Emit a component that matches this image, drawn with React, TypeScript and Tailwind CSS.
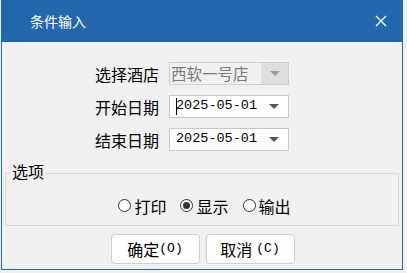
import { useState } from 'react';

const cjk = { fontFamily: '"Noto Sans CJK SC", "Noto Sans", sans-serif' };
const mono = { fontFamily: '"Liberation Mono", "Noto Sans CJK SC", monospace' };

function Caret({ color = '#555' }: { color?: string }) {
  return (
    <svg width="10" height="6" viewBox="0 0 10 6">
      <path d="M0 0h10L5 5z" fill={color} />
    </svg>
  );
}

function DateBox({ value, focused }: { value: string; focused?: boolean }) {
  return (
    <div className="flex h-[23px] w-[120px] items-center border border-[#c8c8c8] bg-white pl-[6px] pr-[9px]">
      {focused && <span className="mr-[-1px] h-[17px] w-px bg-black" />}
      <span className="flex-1 text-[13.5px] text-black" style={mono}>
        {value}
      </span>
      <Caret />
    </div>
  );
}

function Radio({ label, checked, onClick }: { label: string; checked: boolean; onClick: () => void }) {
  return (
    <button onClick={onClick} className="flex items-center gap-[3px]">
      <span className="flex h-[13px] w-[13px] items-center justify-center rounded-full border border-[#333] bg-white">
        {checked && <span className="h-[7px] w-[7px] rounded-full bg-[#333]" />}
      </span>
      <span className="text-[16px] leading-none text-black" style={cjk}>
        {label}
      </span>
    </button>
  );
}

export default function App() {
  const [opt, setOpt] = useState('显示');

  return (
    <div className="h-[273px] w-[407px] bg-[#f0f0f0] pl-px">
      <div className="flex h-[270px] w-[402px] flex-col border border-t-0 border-[#2367ad] bg-[#f0f0f0]">
        {/* Title bar */}
        <div className="flex h-[42px] items-center justify-between bg-[#2367ad] pl-[28px] pr-[15px]">
          <span className="text-[14px] text-white" style={cjk}>
            条件输入
          </span>
          <svg width="12" height="12" viewBox="0 0 12 12">
            <path d="M1 1l10 10M11 1L1 11" stroke="#fff" strokeWidth="1.4" />
          </svg>
        </div>

        {/* Fields */}
        <div className="flex flex-col gap-[10px] pl-[93px] pt-[20px]">
          <div className="flex items-center gap-[10px]">
            <span className="w-[64px] text-[16px] leading-none text-black" style={cjk}>
              选择酒店
            </span>
            <div className="flex h-[23px] w-[120px] items-center border border-[#cfcfcf] bg-[#f0f0f0]">
              <span className="flex-1 pl-[1px] text-[15.5px] leading-none text-[#7a7a7a]" style={cjk}>
                西软一号店
              </span>
              <div className="flex h-full w-[27px] items-center justify-center bg-[#dedede]">
                <Caret color="#999" />
              </div>
            </div>
          </div>
          <div className="flex items-center gap-[10px]">
            <span className="w-[64px] text-[16px] leading-none text-black" style={cjk}>
              开始日期
            </span>
            <DateBox value="2025-05-01" focused />
          </div>
          <div className="flex items-center gap-[10px]">
            <span className="w-[64px] text-[16px] leading-none text-black" style={cjk}>
              结束日期
            </span>
            <DateBox value="2025-05-01" />
          </div>
        </div>

        {/* Options group */}
        <div className="relative mx-[3px] mt-[22px] h-[53px] border border-[#d9d9d9]">
          <span className="absolute left-[5px] top-[-11px] bg-[#f0f0f0] px-[1px] text-[16px] leading-none text-black" style={cjk}>
            选项
          </span>
          <div className="flex h-full items-center justify-center gap-[14px] pl-[5px] pt-[12px]">
            {['打印', '显示', '输出'].map((o) => (
              <Radio key={o} label={o} checked={opt === o} onClick={() => setOpt(o)} />
            ))}
          </div>
        </div>

        {/* Buttons */}
        <div className="mt-[8px] flex justify-center gap-[6px] pl-[1px]">
          <button className="flex h-[30px] w-[89px] items-center justify-center rounded-[4px] border border-[#cfcfcf] bg-white text-[16px] text-black" style={cjk}>
            确定<span className="text-[13px]" style={mono}>(O)</span>
          </button>
          <button className="flex h-[30px] w-[89px] items-center justify-center rounded-[4px] border border-[#cfcfcf] bg-white text-[16px] text-black" style={cjk}>
            取消<span className="ml-[4px] text-[13px]" style={mono}>(C)</span>
          </button>
        </div>
      </div>
    </div>
  );
}
